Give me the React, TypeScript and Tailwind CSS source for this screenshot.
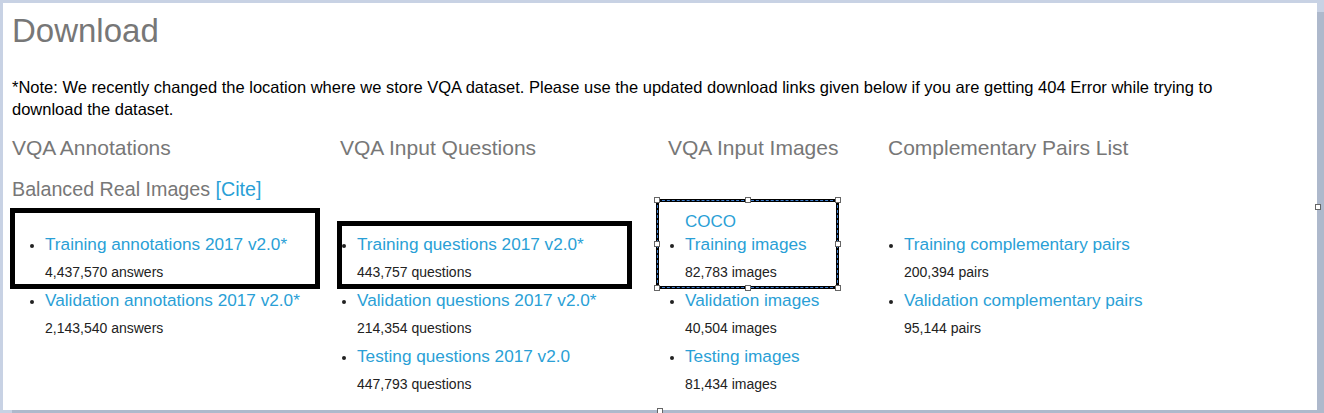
const font = { fontFamily: '"Liberation Sans", Arial, sans-serif' };

type Item = { label: string; count: string };

const annotations: Item[] = [
  { label: "Training annotations 2017 v2.0*", count: "4,437,570 answers" },
  { label: "Validation annotations 2017 v2.0*", count: "2,143,540 answers" },
];

const questions: Item[] = [
  { label: "Training questions 2017 v2.0*", count: "443,757 questions" },
  { label: "Validation questions 2017 v2.0*", count: "214,354 questions" },
  { label: "Testing questions 2017 v2.0", count: "447,793 questions" },
];

const images: Item[] = [
  { label: "Training images", count: "82,783 images" },
  { label: "Validation images", count: "40,504 images" },
  { label: "Testing images", count: "81,434 images" },
];

const pairs: Item[] = [
  { label: "Training complementary pairs", count: "200,394 pairs" },
  { label: "Validation complementary pairs", count: "95,144 pairs" },
];

function List({ items, indent }: { items: Item[]; indent: string }) {
  return (
    <ul className={`list-disc list-outside ${indent}`}>
      {items.map((item) => (
        <li key={item.label} className="text-[14px] text-[#222]">
          <a href="#" className="block text-[17.2px] leading-[28px] text-[#2a9fd6]">
            {item.label}
          </a>
          <div className="leading-[28px]">{item.count}</div>
        </li>
      ))}
    </ul>
  );
}

function Handle({ className }: { className: string }) {
  return (
    <span
      className={`absolute w-[6px] h-[6px] bg-white border border-[#666] ${className}`}
    />
  );
}

export default function App() {
  return (
    <div className="w-[1324px] h-[413px] bg-[#c8d2e4] pl-[3px] pt-[3px] overflow-hidden" style={font}>
      <div className="relative w-[1314px] h-[407px] bg-white shadow-[9px_9px_0_0_#aeb9cc] pt-[8px] px-[9px]">
        <h1 className="text-[33px] leading-[40px] text-[#777]">Download</h1>
        <p className="mt-[25px] text-[16.5px] leading-[22px] text-black max-w-[1230px]">
          *Note: We recently changed the location where we store VQA dataset. Please use the updated
          download links given below if you are getting 404 Error while trying to download the
          dataset.
        </p>

        <div className="grid grid-cols-[328px_328px_220px_1fr] mt-[16px]">
          <h3 className="text-[21px] leading-[24px] text-[#777]">VQA Annotations</h3>
          <h3 className="text-[21px] leading-[24px] text-[#777]">VQA Input Questions</h3>
          <h3 className="text-[21px] leading-[24px] text-[#777]">VQA Input Images</h3>
          <h3 className="text-[21px] leading-[24px] text-[#777]">Complementary Pairs List</h3>

          <div className="mt-[17px] h-[53px] text-[19.7px] leading-[24px] text-[#777]">
            Balanced Real Images <a href="#" className="text-[#2a9fd6]">[Cite]</a>
          </div>
          <div className="mt-[17px] h-[53px]" />
          <div className="mt-[17px] h-[53px] flex items-end pl-[17px]">
            <span className="text-[17px] leading-[17px] text-[#2a9fd6]">COCO</span>
          </div>
          <div className="mt-[17px] h-[53px]" />

          <List items={annotations} indent="pl-[33px]" />
          <List items={questions} indent="pl-[17px]" />
          <List items={images} indent="pl-[17px]" />
          <List items={pairs} indent="pl-[16px]" />
        </div>

        {/* highlight boxes drawn over the table */}
        <div className="absolute left-[7px] top-[205px] w-[310px] h-[81px] border-[5px] border-black" />
        <div className="absolute left-[334px] top-[218px] w-[295px] h-[68px] border-[5px] border-black" />
        <div className="absolute left-[653px] top-[196px] w-[183px] h-[90px] border-[3px] border-black">
          <div className="absolute -inset-[2px] border border-dashed border-[#3f7fd0]" />
          <Handle className="-left-[5px] -top-[5px]" />
          <Handle className="left-1/2 -translate-x-1/2 -top-[5px]" />
          <Handle className="-right-[5px] -top-[5px]" />
          <Handle className="-left-[5px] top-1/2 -translate-y-1/2" />
          <Handle className="-right-[5px] top-1/2 -translate-y-1/2" />
          <Handle className="-left-[5px] -bottom-[5px]" />
          <Handle className="left-1/2 -translate-x-1/2 -bottom-[5px]" />
          <Handle className="-right-[5px] -bottom-[5px]" />
        </div>

        {/* panel selection handles */}
        <Handle className="-right-[4px] top-[201px]" />
        <Handle className="left-[654px] -bottom-[4px]" />
      </div>
    </div>
  );
}
